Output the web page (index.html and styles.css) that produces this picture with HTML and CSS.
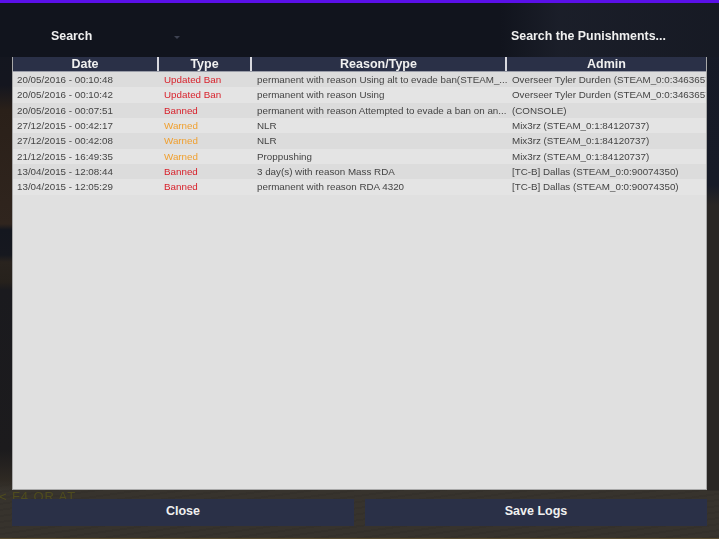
FILE: index.html
```html
<!DOCTYPE html>
<html lang="en">
<head>
  <meta charset="UTF-8" />
  <title>Punishment Logs</title>
  <link rel="stylesheet" href="styles.css">
</head>
<body>
  <div class="top-strip"></div>

  <div class="search-row">
    <span class="search-label">Search</span>
    <span class="search-arrow"></span>
    <span class="search-hint">Search the Punishments...</span>
  </div>

  <div class="log-panel">
    <div class="log-row log-head">
      <div>Date</div>
      <div>Type</div>
      <div>Reason/Type</div>
      <div>Admin</div>
    </div>
    <div class="log-row">
      <div>20/05/2016 - 00:10:48</div>
      <div class="red">Updated Ban</div>
      <div>permanent with reason Using alt to evade ban(STEAM_...</div>
      <div>Overseer Tyler Durden (STEAM_0:0:34636577)</div>
    </div>
    <div class="log-row">
      <div>20/05/2016 - 00:10:42</div>
      <div class="red">Updated Ban</div>
      <div>permanent with reason Using</div>
      <div>Overseer Tyler Durden (STEAM_0:0:34636577)</div>
    </div>
    <div class="log-row">
      <div>20/05/2016 - 00:07:51</div>
      <div class="red">Banned</div>
      <div>permanent with reason Attempted to evade a ban on an...</div>
      <div>(CONSOLE)</div>
    </div>
    <div class="log-row">
      <div>27/12/2015 - 00:42:17</div>
      <div class="orange">Warned</div>
      <div>NLR</div>
      <div>Mix3rz (STEAM_0:1:84120737)</div>
    </div>
    <div class="log-row">
      <div>27/12/2015 - 00:42:08</div>
      <div class="orange">Warned</div>
      <div>NLR</div>
      <div>Mix3rz (STEAM_0:1:84120737)</div>
    </div>
    <div class="log-row">
      <div>21/12/2015 - 16:49:35</div>
      <div class="orange">Warned</div>
      <div>Proppushing</div>
      <div>Mix3rz (STEAM_0:1:84120737)</div>
    </div>
    <div class="log-row">
      <div>13/04/2015 - 12:08:44</div>
      <div class="red">Banned</div>
      <div>3 day(s) with reason Mass RDA</div>
      <div>[TC-B] Dallas (STEAM_0:0:90074350)</div>
    </div>
    <div class="log-row">
      <div>13/04/2015 - 12:05:29</div>
      <div class="red">Banned</div>
      <div>permanent with reason RDA 4320</div>
      <div>[TC-B] Dallas (STEAM_0:0:90074350)</div>
    </div>
  </div>

  <div class="hud-text">&lt; F4 OR AT</div>

  <div class="button-row">
    <div class="btn">Close</div>
    <div class="btn">Save Logs</div>
  </div>
</body>
</html>
```

FILE: styles.css
```css
:root {
  --navy: #2a3047;
  --panel: #e0e0e0;
  --ground: #37332d;
}
* {
  box-sizing: border-box;
  margin: 0;
  padding: 0;
}
body {
  width: 719px;
  height: 539px;
  overflow: hidden;
  position: relative;
  display: flex;
  flex-direction: column;
  font-family: "Liberation Sans", Arial, sans-serif;
  /* game scene behind the window: left edge, right edge, then ground */
  background:
    linear-gradient(to bottom, #13161f 0, #14161f 85px, #2a2019 110px, #30251e 224px, #14171f 230px, #16181f 255px, #29231e 262px, #26211c 282px, #1a1a1e 290px, #1c1b1d 450px, #2e2923 480px, transparent 490px) left top / 12px 100% no-repeat,
    linear-gradient(to bottom, #161a26 0, #171b27 185px, #292624 205px, #292624 490px, transparent 491px) right top / 12px 100% no-repeat,
    linear-gradient(to top, #5c4f34 0, #5c4f34 1px, transparent 1px),
    repeating-linear-gradient(172deg, rgba(0, 0, 0, 0.05) 0, rgba(0, 0, 0, 0.05) 2px, transparent 2px, transparent 6px),
    var(--ground);
}
.top-strip {
  height: 3px;
  background: #5a10e8;
  flex: none;
}
.search-row {
  height: 54px;
  flex: none;
  display: grid;
  grid-template-columns: 123px 337px 1fr;
  align-items: center;
  padding: 24px 0 12px 51px;
  background:
    linear-gradient(to right, transparent 0, transparent 500px, rgba(70, 76, 96, 0.18) 560px, rgba(70, 76, 96, 0.1) 100%),
    #11141d;
  color: #f0f0f0;
  font-size: 12.4px;
  font-weight: bold;
}
.search-label,
.search-hint {
  filter: blur(0.3px);
}
.search-arrow {
  width: 0;
  height: 0;
  margin-top: 2px;
  border-left: 3px solid transparent;
  border-right: 3px solid transparent;
  border-top: 3px solid #3d4150;
}
.log-panel {
  height: 433px;
  flex: none;
  margin: 0 12px;
  background: var(--panel);
  border: 1px solid #a8a8a8;
  border-top: 0;
  overflow: hidden;
  font-size: 9.8px;
  color: #444;
  filter: blur(0.3px);
}
.log-row {
  display: grid;
  grid-template-columns: 146px 93px 255px 199px;
  height: 15.33px;
  line-height: 15px;
  white-space: nowrap;
}
.log-row > div {
  overflow: hidden;
  padding-left: 5px;
}
.log-row > div:first-child {
  padding-left: 4px;
}
.log-row:nth-child(even) {
  background: #dcdcdc;
}
.log-row:nth-child(odd) {
  background: #e4e4e4;
}
.log-row.log-head {
  height: 15px;
  line-height: 15px;
  background: var(--navy);
  color: #f0f0f0;
  font-size: 12.5px;
  font-weight: bold;
  text-align: center;
  border-bottom: 1px solid #9a9da8;
}
.log-row.log-head > div {
  padding-left: 0;
  border-right: 2px solid #d8d8de;
}
.log-row.log-head > div:last-child {
  border-right: 0;
}
.log-row > .red {
  color: #d8222c;
}
.log-row > .orange {
  color: #f0a030;
}
/* HUD hint from the game, mostly hidden by the buttons */
.hud-text {
  position: absolute;
  left: -1px;
  top: 489px;
  font-size: 13px;
  letter-spacing: 0.9px;
  color: #4f4c1e;
  filter: blur(0.4px);
}
.button-row {
  flex: none;
  display: flex;
  gap: 11px;
  margin: 9px 12px 0;
  position: relative;
}
.btn {
  flex: 1;
  height: 27px;
  line-height: 25px;
  text-align: center;
  background: var(--navy);
  color: #f0f0f0;
  font-size: 12.5px;
  font-weight: bold;
}
```
